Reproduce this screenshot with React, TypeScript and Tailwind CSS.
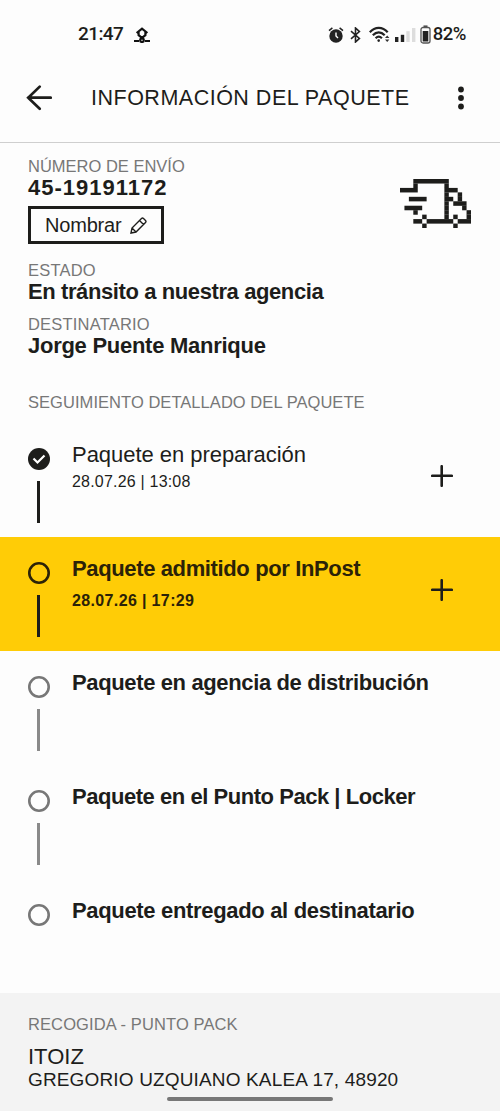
import { type ReactNode } from 'react';

type StepState = 'done' | 'current' | 'pending';

type Step = {
  title: string;
  date?: string;
  state: StepState;
  titleClass: string;
};

const steps: Step[] = [
  { title: 'Paquete en preparación', date: '28.07.26 | 13:08', state: 'done', titleClass: 'tracking-[-0.04px]' },
  { title: 'Paquete admitido por InPost', date: '28.07.26 | 17:29', state: 'current', titleClass: 'font-bold tracking-[-0.37px]' },
  { title: 'Paquete en agencia de distribución', state: 'pending', titleClass: 'font-bold tracking-[-0.37px]' },
  { title: 'Paquete en el Punto Pack | Locker', state: 'pending', titleClass: 'font-bold tracking-[-0.46px]' },
  { title: 'Paquete entregado al destinatario', state: 'pending', titleClass: 'font-bold tracking-[-0.33px]' },
];

// Each entry is [column, row, width] on a 16x11 grid
const truckPixels = [
  [3, 0, 8],
  [3, 1, 1], [10, 1, 1],
  [0, 2, 4], [10, 2, 3],
  [10, 3, 1], [13, 3, 1],
  [2, 4, 4], [10, 4, 2], [13, 4, 1],
  [10, 5, 1], [12, 5, 3],
  [1, 6, 4], [10, 6, 1], [14, 6, 1],
  [3, 7, 1], [10, 7, 1], [15, 7, 1],
  [5, 8, 1], [10, 8, 1], [12, 8, 1], [15, 8, 1],
  [3, 9, 2], [6, 9, 6], [13, 9, 3],
  [5, 10, 1], [12, 10, 1],
];

function Truck() {
  return (
    <svg className="h-[49px] w-[71px]" viewBox="0 0 16 11" fill="#1d1d1b" preserveAspectRatio="none">
      {truckPixels.map(([x, y, w]) => (
        <rect key={`${x}-${y}`} x={x} y={y} width={w} height={1.02} />
      ))}
    </svg>
  );
}

function StatusBar() {
  return (
    <div className="flex h-[67px] items-center pl-[78px] pr-[34px] pt-[2px] font-[Roboto,sans-serif] text-[19px] font-medium text-[#1d1d1b]">
      <span className="w-[46px] tracking-[-0.6px]">21:47</span>
      <svg className="ml-[10px] h-4 w-4" viewBox="0 0 16 16" fill="none" stroke="#111" strokeWidth="2.2">
        <path d="M2.600 6 8 1.600 13.400 6M4.600 5v3.200L8 10.800l3.400-2.600V5" />
        <path d="M8 9v3M0 14h5M11 14h5" />
        <circle cx="8" cy="13.200" r="1.800" />
      </svg>

      <div className="ml-auto flex items-center">
        <svg className="h-4 w-4" viewBox="0 0 16 16">
          <circle cx="8" cy="9" r="6.700" fill="#222" />
          <path d="M1 3.600 4.400.9M15 3.600 11.600.9" stroke="#222" strokeWidth="1.500" />
          <path d="M8 5.400V9l2 2" stroke="#fff" strokeWidth="1.400" fill="none" />
        </svg>
        <svg className="ml-[6px] h-4 w-[11px]" viewBox="0 0 11 16" fill="none" stroke="#222" strokeWidth="1.600">
          <path d="M1 4.200 9.400 11.400 5.500 15V1L9.400 4.600 1 11.800" />
        </svg>
        <svg className="ml-[8px] h-[17px] w-[22px]" viewBox="0 0 22 17" fill="none" stroke="#222" strokeWidth="2.200">
          <path d="M.8 6.200C6 .4 13.500.4 18.700 6.200" />
          <path d="M3.800 9.200C7.500 5.400 12 5.400 15.700 9.200" />
          <path d="M6.600 12.200C8.500 10.300 11 10.300 12.900 12.200" />
          <circle cx="9.700" cy="14.600" r="1.300" fill="#222" stroke="none" />
          <path d="M16 12 18.200 9.600 20.400 12ZM16 13.500 18.200 15.900 20.400 13.500Z" fill="#333" stroke="none" />
        </svg>
        <svg className="ml-[4px] h-4 w-[21px]" viewBox="0 0 21 16" fill="#222">
          <rect x="0" y="10" width="3.400" height="5" />
          <rect x="5.800" y="7.800" width="3.400" height="7.200" />
          <rect x="11.300" y="4.200" width="3.400" height="10.800" fill="#ddd" />
          <rect x="17" y="1" width="3.400" height="14" fill="#ddd" />
        </svg>
        <svg className="ml-[4px] h-[19px] w-[11px]" viewBox="0 0 11 19">
          <path d="M3.500 1.200h4" stroke="#444" strokeWidth="1.500" />
          <rect x="1" y="2.500" width="9" height="15.500" rx="2" fill="none" stroke="#555" strokeWidth="1.300" />
          <rect x="2.700" y="6" width="5.600" height="10.500" fill="#222" />
        </svg>
        <span className="ml-[2px] text-[18.5px] font-medium tracking-[-0.5px]">82%</span>
      </div>
    </div>
  );
}

function Header() {
  return (
    <header className="flex h-[76px] items-center border-b border-[#cfcfcf] pb-[13px] pl-[26px] pr-[34px]">
      <svg className="h-[26px] w-[26px]" viewBox="0 0 26 26" fill="none" stroke="#1d1d1b" strokeWidth="2.700" strokeLinecap="round">
        <path d="M24.700 12.700H2.200M13.700 1.600 2.200 12.700l11.500 11.100" />
      </svg>
      <h1 className="ml-[39px] whitespace-nowrap text-[21.5px] leading-6 tracking-[0.5px]">INFORMACIÓN DEL PAQUETE</h1>
      <svg className="ml-auto h-6 w-[10px]" viewBox="0 0 10 24" fill="#1d1d1b">
        <circle cx="5" cy="3.500" r="2.900" />
        <circle cx="5" cy="12" r="2.900" />
        <circle cx="5" cy="20.500" r="2.900" />
      </svg>
    </header>
  );
}

type FieldProps = {
  label: string;
  labelClass?: string;
  valueClass: string;
  children: ReactNode;
};

function Field({ label, labelClass = '', valueClass, children }: FieldProps) {
  return (
    <div>
      <p className={`text-[16.5px] leading-5 text-[#777] ${labelClass}`}>{label}</p>
      <p className={`text-[22px] font-bold leading-6 ${valueClass}`}>{children}</p>
    </div>
  );
}

function StepMarker({ state, last }: { state: StepState; last: boolean }) {
  return (
    <div className="w-[22px]">
      {state === 'done' ? (
        <svg className="h-[22px] w-[22px]" viewBox="0 0 22 22" fill="none">
          <circle cx="11" cy="11" r="11" fill="#1d1d1b" />
          <path d="m5.500 10.500 4 4 7-7" stroke="#fff" strokeWidth="2.200" />
        </svg>
      ) : (
        <svg
          className={`h-[22px] w-[22px] ${state === 'current' ? 'text-[#2b2208]' : 'text-[#777]'}`}
          viewBox="0 0 22 22"
          fill="none"
        >
          <circle cx="11" cy="11" r="9.700" stroke="currentColor" strokeWidth="2.600" />
        </svg>
      )}
      {!last && (
        <div
          className={`ml-[9px] mt-[11px] h-[42px] w-[3px] ${
            state === 'pending' ? 'bg-[#8a8a8a]' : 'bg-[#1d1d1b]'
          }`}
        />
      )}
    </div>
  );
}

function PlusIcon() {
  return (
    <svg className="h-[22px] w-[22px]" viewBox="0 0 22 22" stroke="#1d1d1b" strokeWidth="2.600" strokeLinecap="round">
      <path d="M10.700 1.200v19.600M1.200 10.800h19.600" />
    </svg>
  );
}

function StepRow({ step, last }: { step: Step; last: boolean }) {
  const current = step.state === 'current';

  return (
    <li className={`flex h-[114px] pl-[28px] pr-[47px] ${current ? 'bg-[#ffcc06] text-[#2b2208]' : ''}`}>
      <div className="pt-[25px]">
        <StepMarker state={step.state} last={last} />
      </div>
      <div className="ml-[22px] flex-1 whitespace-nowrap pt-[20px]">
        <p className={`text-[22px] leading-6 ${step.titleClass}`}>{step.title}</p>
        {step.date && (
          <p
            className={`text-[16px] leading-5 ${
              current ? 'mt-[10px] font-bold tracking-[0.36px]' : 'mt-[5px] tracking-[0.2px]'
            }`}
          >
            {step.date}
          </p>
        )}
      </div>
      {step.date && (
        <div className="pt-[42px]">
          <PlusIcon />
        </div>
      )}
    </li>
  );
}

export default function App() {
  return (
    <div className="flex h-[1111px] w-[500px] flex-col overflow-hidden bg-[#fdfdfd] font-['Liberation_Sans',Arial,sans-serif] text-[#1d1d1b]">
      <StatusBar />
      <Header />

      <section className="flex h-[280px] justify-between pl-[28px] pr-[29px] pt-[13px]">
        <div className="whitespace-nowrap">
          <Field label="NÚMERO DE ENVÍO" valueClass="tracking-[1px]">45-19191172</Field>
          <button className="mt-[6px] flex h-[38px] w-[136px] items-center border-[3px] border-[#1d1d1b] pl-[14px] text-[20px]">
            <span className="tracking-[-0.2px]">Nombrar</span>
            <svg className="ml-[9px] h-[17px] w-[17px]" viewBox="0 0 17 17" fill="none" stroke="#1d1d1b" strokeWidth="1.400">
              <path d="M1 16 2 11 11.500 1.500Q12.500.5 13.500 1.500L15.500 3.500Q16.500 4.500 15.500 5.500L6 15ZM2 11 6 15M9.500 3.500l4 4" />
            </svg>
          </button>
          <div className="mt-[16px] space-y-[10px]">
            <Field label="ESTADO" labelClass="tracking-[0.2px]" valueClass="tracking-[-0.4px]">
              En tránsito a nuestra agencia
            </Field>
            <Field label="DESTINATARIO" labelClass="tracking-[0.2px]" valueClass="tracking-[-0.27px]">
              Jorge Puente Manrique
            </Field>
          </div>
          <h2 className="mt-[34px] text-[16.5px] leading-5 tracking-[0.05px] text-[#777]">
            SEGUIMIENTO DETALLADO DEL PAQUETE
          </h2>
        </div>
        <div className="pt-[23px]">
          <Truck />
        </div>
      </section>

      <ul>
        {steps.map((step, i) => (
          <StepRow key={step.title} step={step} last={i === steps.length - 1} />
        ))}
      </ul>

      <footer className="flex flex-1 flex-col whitespace-nowrap bg-[#f3f3f3] pl-[28px] pt-[21px]">
        <p className="text-[16.5px] leading-5 tracking-[0.1px] text-[#777]">RECOGIDA - PUNTO PACK</p>
        <p className="mt-[11px] text-[22px] leading-6">ITOIZ</p>
        <p className="text-[19px] leading-[22px] tracking-[0.15px]">GREGORIO UZQUIANO KALEA 17, 48920</p>
        <div className="ml-[139px] mt-[6px] h-[4px] w-[166px] rounded-full bg-[#777]" />
      </footer>
    </div>
  );
}
